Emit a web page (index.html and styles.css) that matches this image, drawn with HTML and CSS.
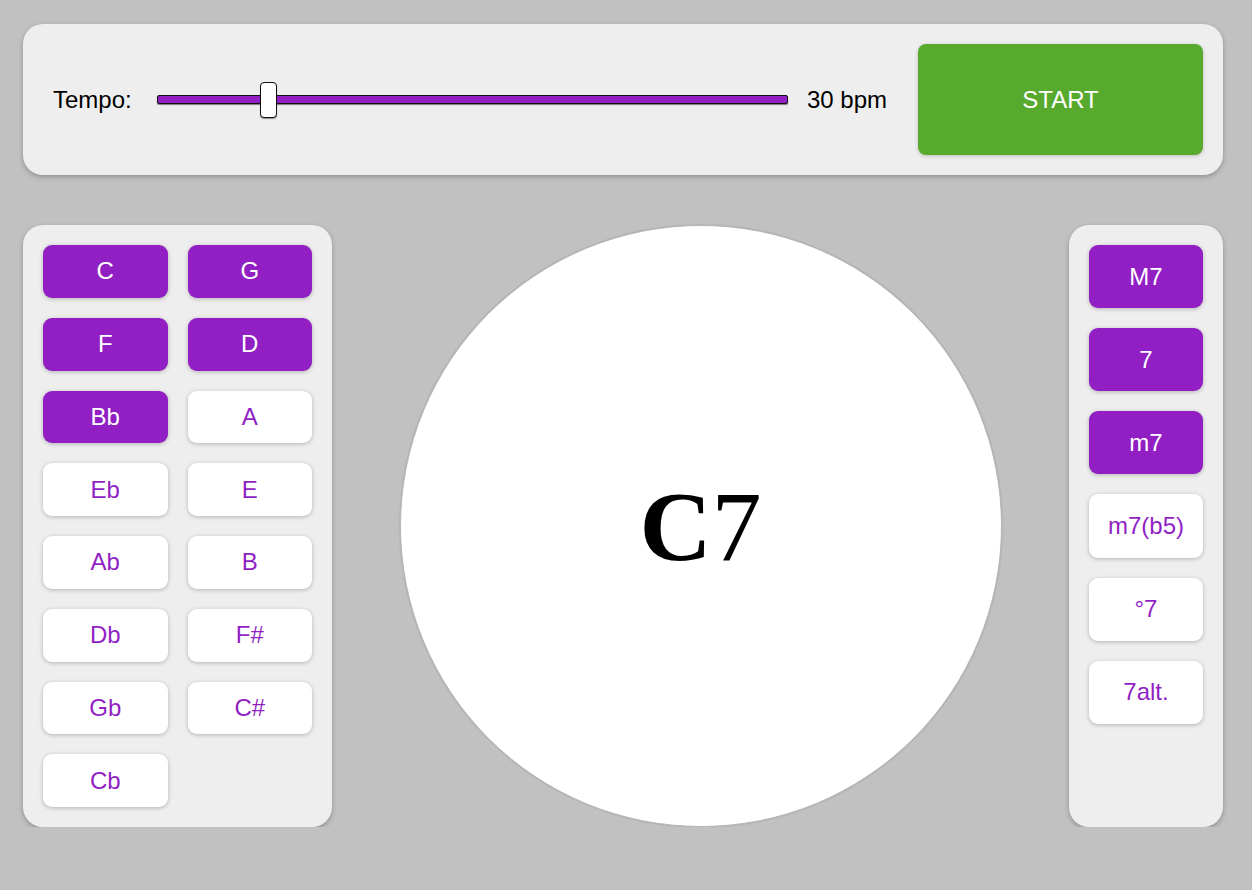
FILE: index.html
```html
<!DOCTYPE html>
<html>
<head>
<meta charset="utf-8">
<link rel="stylesheet" href="styles.css">
</head>
<body>
<div class="app">
  <div class="panel top">
    <span class="label">Tempo:</span>
    <input class="slider" type="range" min="20" max="80" value="30">
    <span class="bpm">30 bpm</span>
    <button class="start">START</button>
  </div>
  <div class="main">
    <div class="panel keys">
      <button class="btn on">C</button>
      <button class="btn on">G</button>
      <button class="btn on">F</button>
      <button class="btn on">D</button>
      <button class="btn on">Bb</button>
      <button class="btn">A</button>
      <button class="btn">Eb</button>
      <button class="btn">E</button>
      <button class="btn">Ab</button>
      <button class="btn">B</button>
      <button class="btn">Db</button>
      <button class="btn">F#</button>
      <button class="btn">Gb</button>
      <button class="btn">C#</button>
      <button class="btn">Cb</button>
    </div>
    <div class="circle"><span class="chord"><b>C</b>7</span></div>
    <div class="panel types">
      <button class="btn on">M7</button>
      <button class="btn on">7</button>
      <button class="btn on">m7</button>
      <button class="btn">m7(b5)</button>
      <button class="btn">°7</button>
      <button class="btn">7alt.</button>
    </div>
  </div>
</div>
</body>
</html>
```

FILE: styles.css
```css
* { box-sizing: border-box; }
html, body { margin: 0; padding: 0; }
body {
  background: #c1c1c1;
  font-family: "Liberation Sans", Arial, sans-serif;
  color: #000;
}
.app {
  width: 1200px;
  margin: 24px 0 0 23px;
}
.panel {
  background: #eeeeee;
  border-radius: 20px;
  box-shadow: 0 2px 5px rgba(0,0,0,0.25);
}
.top {
  height: 151px;
  padding: 20px 20px 20px 30px;
  display: flex;
  align-items: center;
}
.label { font-size: 24px; margin-right: 25px; }
.bpm { font-size: 24px; margin-right: 31px; }
.slider {
  -webkit-appearance: none;
  appearance: none;
  flex: 1;
  margin: 0 19px 0 0;
  height: 9px;
  background: #911fc3;
  border: 1px solid #111;
  border-radius: 2px;
  box-shadow: 0 1px 1px rgba(0,0,0,0.5);
  outline: none;
}
.slider::-webkit-slider-thumb {
  -webkit-appearance: none;
  appearance: none;
  width: 17px;
  height: 36px;
  background: #fff;
  border: 1px solid #111;
  border-radius: 4px;
  box-shadow: 0 1px 1px rgba(0,0,0,0.4);
  cursor: pointer;
}
.start {
  width: 285px;
  height: 111px;
  border: none;
  border-radius: 8px;
  background: #58aa2f;
  color: #fff;
  font-family: "Liberation Sans", Arial, sans-serif;
  font-size: 24px;
  box-shadow: 0 1px 4px rgba(0,0,0,0.2);
}
.main {
  margin-top: 50px;
  display: flex;
  justify-content: space-between;
  align-items: stretch;
}
.keys {
  width: 309px;
  padding: 20px;
  display: grid;
  grid-template-columns: 1fr 1fr;
  grid-template-rows: repeat(8, 1fr);
  gap: 20px;
}
.types {
  width: 154px;
  padding: 20px;
  display: grid;
  grid-template-columns: 1fr;
  grid-template-rows: repeat(7, 1fr);
  gap: 20px;
}
.btn {
  border: none;
  border-radius: 9px;
  background: #fff;
  color: #911fc3;
  font-family: "Liberation Sans", Arial, sans-serif;
  font-size: 24px;
  box-shadow: 0 1px 4px rgba(0,0,0,0.25);
  padding: 0;
}
.btn.on { background: #911fc3; color: #fff; }
.circle {
  width: 602px;
  height: 602px;
  border-radius: 50%;
  background: #fff;
  border: 1px solid #b8b8b8;
  box-shadow: 0 0 2px rgba(0,0,0,0.2);
  display: flex;
  align-items: center;
  justify-content: center;
}
.chord {
  font-family: "Liberation Serif", "Times New Roman", serif;
  font-size: 100px;
  line-height: 1;
  margin-top: 2px;
}
.chord b { font-weight: bold; }
```
